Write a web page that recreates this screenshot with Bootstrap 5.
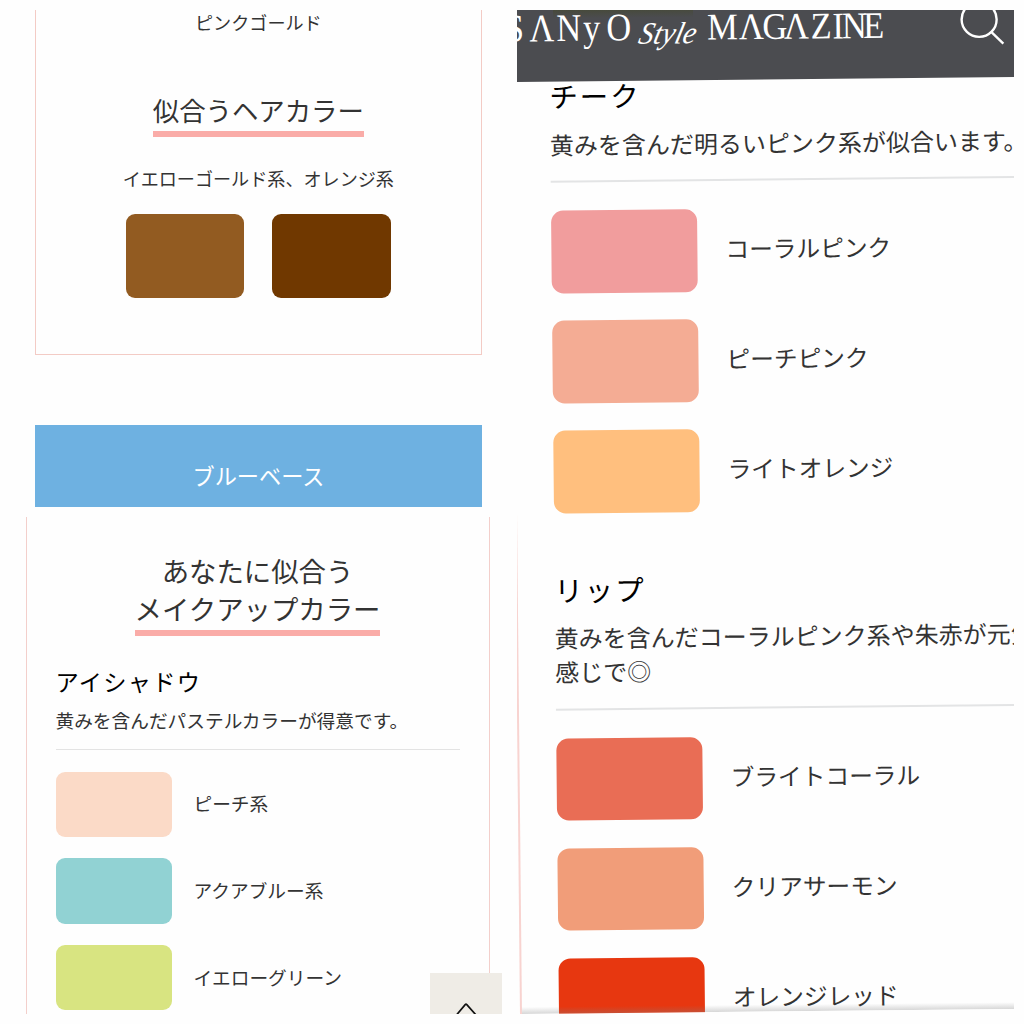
<!DOCTYPE html>
<html lang="ja">
<head>
<meta charset="utf-8">
<meta name="viewport" content="width=device-width, initial-scale=1">
<title>SANYO Style MAGAZINE</title>
<link href="https://cdn.jsdelivr.net/npm/bootstrap@5.3.0/dist/css/bootstrap.min.css" rel="stylesheet">
<style>
body{background:#fefefe;color:#333;font-family:"Noto Sans CJK JP",sans-serif;width:1024px;height:1024px;overflow:hidden}
.board{width:1024px;height:1024px;padding:10px}
.col-left{width:497px}
.pane{height:497px}
.pane-right{width:497px;height:1004px}
.swatch{flex:none}
/* hair colour card */
.hair{width:447.5px;height:345px;margin-left:24.6px;border:solid #f3cbc5;border-width:0 1.5px 1.5px;font-size:18.1px;line-height:27px}
.first-name{margin-top:-1px}
.title-line{border-bottom:6px solid #faaca8;line-height:38px}
.hair .title-line{font-size:26.4px;line-height:34px;padding-bottom:4px;margin-top:57px}
.hair .names{margin-top:28px}
.hair .pair{gap:28px;margin-top:22px}
.hair .swatch{width:118.5px;height:84px;border-radius:9px}
.base{width:447px;height:82px;margin:70px 0 0 25px;background:#6eb1e1;color:#fff;font-size:22.2px;line-height:32px;padding-top:34px}
/* make-up card */
.makeup{width:464px;height:497px;margin-left:16px;border:solid #f3cfcb;border-width:0 1.5px;padding:34px 29.5px 0 28.5px;font-size:18.7px}
.makeup .title-line{font-size:27.4px;display:inline-block;padding-bottom:3px}
.makeup h2{font-size:27.4px;line-height:38px;margin:0;font-weight:400}
.kind{color:#000;font-weight:400;margin:0;white-space:nowrap}
.makeup .kind{font-size:23.2px;letter-spacing:1.3px;line-height:34px;margin-top:28px}
.makeup .note{line-height:28px;margin-top:8px;padding-bottom:14.5px;border-bottom:1.5px solid #e3e3e3;white-space:nowrap}
.makeup .list{gap:21.7px;margin-top:22px}
.makeup .swatch{width:116px;height:65.2px;border-radius:9px}
.makeup .item{gap:22px}
.makeup .item span{margin-top:-2px}
.to-top{right:5px;bottom:0;width:72px;height:41.5px;background:#efece6}
/* slightly turned page */
.tilted{width:530px;height:1003.5px;margin-left:-7px;border-left:2px solid #f8d3d0;transform:rotate(-.57deg);transform-origin:7px 0;font-size:24px;background:#fefefe}
.mast{height:72px;background:#4b4c50;margin-left:-2px}
.mast svg{display:block}
.sect{padding-left:36.5px}
.tilted .kind{font-size:28.5px;letter-spacing:1.9px;line-height:32px;margin-top:-2px}
.tilted .note{margin-top:16px;padding-bottom:19px;line-height:34px;border-bottom:2px solid #e3e4e5;white-space:nowrap}
.tilted .list{gap:27.5px;margin-top:28px}
.tilted .swatch{width:146.5px;height:82.5px;border-radius:12px}
.tilted .item{gap:28px}
.tilted .item span{font-size:23.7px;margin-top:-2px}
.tilted .lip{padding-top:62px}
.tilted .lip .note{margin-top:15px;padding-bottom:20px}
.shade{left:-2px;right:0;bottom:0;height:7px;background:linear-gradient(rgba(130,130,130,0),rgba(130,130,130,.32))}
.c1{background:#925b21}.c2{background:#703800}
.c3{background:#fbdac7}.c4{background:#91d2d3}.c5{background:#d8e481}
.c6{background:#f19d9d}.c7{background:#f4ac94}.c8{background:#ffbf7e}
.c9{background:#e96d55}.c10{background:#f19d79}.c11{background:#e73710}
</style>
</head>
<body>
<main class="board d-flex gap-2 justify-content-between">
  <div class="col-left d-flex flex-column justify-content-between">
    <section class="pane overflow-hidden">
      <div class="hair d-flex flex-column align-items-center">
        <div class="first-name">ピンクゴールド</div>
        <div class="title-line">似合うヘアカラー</div>
        <div class="names">イエローゴールド系、オレンジ系</div>
        <div class="pair d-flex"><div class="swatch c1"></div><div class="swatch c2"></div></div>
      </div>
      <div class="base text-center overflow-hidden">ブルーベース</div>
    </section>
    <section class="pane overflow-hidden position-relative">
      <div class="makeup">
        <div class="text-center">
          <h2>あなたに似合う</h2>
          <div class="title-line">メイクアップカラー</div>
        </div>
        <h3 class="kind">アイシャドウ</h3>
        <div class="note">黄みを含んだパステルカラーが得意です。</div>
        <div class="list d-flex flex-column">
          <div class="item d-flex align-items-center"><div class="swatch c3"></div><span>ピーチ系</span></div>
          <div class="item d-flex align-items-center"><div class="swatch c4"></div><span>アクアブルー系</span></div>
          <div class="item d-flex align-items-center"><div class="swatch c5"></div><span>イエローグリーン</span></div>
        </div>
      </div>
      <div class="to-top position-absolute">
        <svg width="72" height="42" viewBox="0 0 72 42"><path d="M26.5 42 L35.2 31.6 Q36 30.8 36.8 31.6 L46 42" fill="none" stroke="#111" stroke-width="1.7"/></svg>
      </div>
    </section>
  </div>
  <section class="pane-right overflow-hidden">
    <div class="tilted position-relative overflow-hidden">
      <header class="mast">
        <svg width="530" height="72" viewBox="-7 0 530 72" fill="#fff" font-family="'Liberation Serif',serif">
          <defs><linearGradient id="tint" x1="0" y1="0" x2="0" y2="1"><stop offset="0" stop-color="#474a3a"/><stop offset="1" stop-color="#474a3a" stop-opacity="0"/></linearGradient></defs>
          <rect x="36" y="0" width="140" height="9" fill="url(#tint)"/>
          <text transform="scale(.88 1)" y="31.5" font-size="39" x="-14 14 44.5 75 101.5">SΛNyO</text>
          <text transform="scale(.92 1)" y="31.5" font-size="37.5" x="206.5 241 266.5 290 319 342.5 353 376">MΛGΛZINE</text>
          <text transform="translate(120 35) skewX(-14)" font-size="31" font-style="italic" textLength="57" lengthAdjust="spacingAndGlyphs">Style</text>
          <g fill="none" stroke="#fff" stroke-width="2.4"><circle cx="462" cy="14" r="17.5"/><path d="M474 26.5 L486 38.5"/></g>
        </svg>
      </header>
      <div class="sect">
        <h3 class="kind">チーク</h3>
        <div class="note">黄みを含んだ明るいピンク系が似合います。</div>
        <div class="list d-flex flex-column">
          <div class="item d-flex align-items-center"><div class="swatch c6"></div><span>コーラルピンク</span></div>
          <div class="item d-flex align-items-center"><div class="swatch c7"></div><span>ピーチピンク</span></div>
          <div class="item d-flex align-items-center"><div class="swatch c8"></div><span>ライトオレンジ</span></div>
        </div>
      </div>
      <div class="sect lip">
        <h3 class="kind">リップ</h3>
        <div class="note">黄みを含んだコーラルピンク系や朱赤が元気な<br>感じで◎</div>
        <div class="list d-flex flex-column">
          <div class="item d-flex align-items-center"><div class="swatch c9"></div><span>ブライトコーラル</span></div>
          <div class="item d-flex align-items-center"><div class="swatch c10"></div><span>クリアサーモン</span></div>
          <div class="item d-flex align-items-center"><div class="swatch c11"></div><span>オレンジレッド</span></div>
        </div>
      </div>
      <div class="shade position-absolute"></div>
    </div>
  </section>
</main>
</body>
</html>
